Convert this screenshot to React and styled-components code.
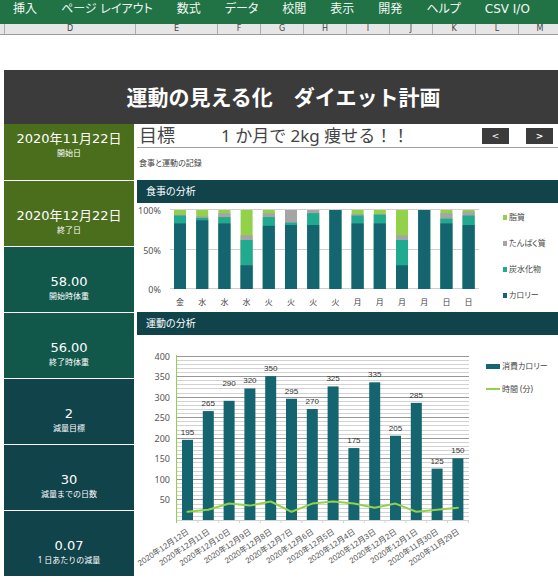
import React from "react";
import styled, { createGlobalStyle } from "styled-components";

const jp = `"Noto Sans CJK JP", sans-serif`;
const ui = `"DejaVu Sans", ${jp}`;
const plain = `"Noto Sans", ${jp}`;
const arial = `"Liberation Sans", ${jp}`;

const colors = {
  ribbon: "#217346",
  title: "#3b3b3b",
  olive: "#4a6e1b",
  green: "#11584a",
  navy: "#11434b",
  calorie: "#156570",
  carb: "#20ab90",
  protein: "#a5a5a5",
  fat: "#92d14a",
};

const GlobalStyle = createGlobalStyle`
  * {
    box-sizing: border-box;
  }

  body {
    margin: 0;
    background: #fff;
    color: #444;
    font-family: ${plain};
    font-feature-settings: "palt";
    overflow-x: hidden;
  }

  h1, h2, p, dl, dd, ul {
    margin: 0;
    padding: 0;
    font-weight: 400;
  }
`;

const Ribbon = styled.nav`
  display: flex;
  gap: 24px;
  height: 24px;
  padding: 0 13px;
  background: ${colors.ribbon};
  overflow: hidden;
`;

const RibbonTab = styled.button`
  height: 18px;
  padding: 0;
  border: 0;
  background: none;
  color: #f2f8f4;
  font: 12px/18px ${ui};
  font-feature-settings: inherit;
  white-space: nowrap;
  cursor: pointer;
`;

const ColumnRow = styled.div`
  display: grid;
  grid-template-columns: 5px 131px 82px repeat(8, 43px);
  height: 11px;
  background: #e6e6e6;
  border-bottom: 1px solid #9b9b9b;
  overflow: hidden;
`;

const ColumnName = styled.span`
  border-right: 1px solid #ababab;
  font: 8px/10px ${ui};
  text-align: center;
`;

const Sheet = styled.main`
  padding: 35px 0 5px 4px;
`;

const Title = styled.h1`
  padding: 10px 0 12px 5px;
  background: ${colors.title};
  color: #fff;
  font: 700 21px/32px ${jp};
  font-feature-settings: normal;
  text-align: center;
  white-space: nowrap;
`;

const Columns = styled.div`
  display: grid;
  grid-template-columns: 130px minmax(0, 1fr);
  gap: 3px;
`;

const Summary = styled.dl`
  display: flex;
  flex-direction: column;
  gap: 1px;
`;

const Card = styled.div`
  display: flex;
  flex-direction: column-reverse;
  height: ${(p) => (p.$first ? 56 : 65)}px;
  padding-bottom: ${(p) => (p.$first ? 21 : 10)}px;
  background: ${(p) => p.$color};
  color: #fff;
  text-align: center;
`;

const CardLabel = styled.dt`
  font: 8px/12px ${plain};
`;

const CardValue = styled.dd`
  font: 13px/16px ${ui};
  white-space: nowrap;
`;

const GoalRow = styled.div`
  display: flex;
  align-items: center;
  height: 24px;
  padding: 0 5px 0 2px;
  border-bottom: 1px solid #a0a0a0;
  font-size: 18px;
  line-height: 23px;
  white-space: nowrap;
`;

const GoalLabel = styled.span`
  width: 82px;
`;

const GoalText = styled.span`
  flex: 1;
  font-size: 17px;
  font-feature-settings: normal;
`;

const Pager = styled.div`
  display: flex;
  gap: 17px;
`;

const PageButton = styled.button`
  width: 27px;
  height: 16px;
  padding: 0;
  border: 0;
  background: ${colors.title};
  color: #fff;
  font: ${(p) => (p.$bold ? 700 : 400)} 9px/16px ${ui};
  cursor: pointer;
`;

const Note = styled.p`
  padding: 7px 2px 9px;
  font-size: 8px;
  line-height: 16px;
`;

const SectionTitle = styled.h2`
  padding: 0 9px;
  background: ${colors.navy};
  color: #fff;
  font-size: 10px;
  line-height: 23px;
`;

const ChartRow = styled.div`
  display: flex;
  align-items: flex-start;
`;

const Chart = styled.svg`
  display: block;
  flex: 1;
  min-width: 0;
`;

const AxisText = styled.text`
  fill: #555;
  font: 9px ${plain};
  text-anchor: end;
`;

const DayText = styled.text`
  fill: #444;
  font: 8px ${plain};
  text-anchor: middle;
`;

const DateText = styled.text`
  fill: #555;
  font: 8px ${arial};
  text-anchor: end;
`;

const BarText = styled.text`
  fill: #333;
  font: 8px ${arial};
  text-anchor: middle;
`;

const Legend = styled.ul`
  display: flex;
  flex-direction: column;
  gap: ${(p) => p.$gap}px;
  width: ${(p) => p.$width}px;
  padding-top: ${(p) => p.$top}px;
  list-style: none;
`;

const LegendItem = styled.li`
  display: flex;
  align-items: center;
  gap: 2px;
  font-size: 8px;
  line-height: 12px;
  white-space: nowrap;
`;

const Swatch = styled.span`
  width: ${(p) => p.$width}px;
  height: ${(p) => p.$height}px;
  background: ${(p) => p.$color};
`;

const tabs = [
  "挿入",
  "ページ レイアウト",
  "数式",
  "データ",
  "校閲",
  "表示",
  "開発",
  "ヘルプ",
  "CSV I/O",
];

const cards = [
  { value: "2020年11月22日", label: "開始日", color: colors.olive },
  { value: "2020年12月22日", label: "終了日", color: colors.olive },
  { value: "58.00", label: "開始時体重", color: colors.green },
  { value: "56.00", label: "終了時体重", color: colors.green },
  { value: "2", label: "減量目標", color: colors.navy },
  { value: "30", label: "減量までの日数", color: colors.navy },
  { value: "0.07", label: "1 日あたりの減量", color: colors.navy },
];

// cumulative percentages: calorie, carb, protein (fat fills the rest)
const meals = [
  ["金", 83, 93, 94],
  ["水", 87, 90, 92],
  ["水", 83, 91, 96],
  ["水", 30, 62, 68],
  ["火", 80, 91, 96],
  ["火", 81, 84, 100],
  ["火", 81, 96, 100],
  ["火", 100, 100, 100],
  ["月", 83, 93, 95],
  ["月", 83, 94, 95],
  ["月", 30, 62, 68],
  ["月", 100, 100, 100],
  ["日", 83, 89, 96],
  ["日", 81, 93, 98],
];

// date, burned calories, minutes, extra label lift
const workouts = [
  ["2020年12月12日", 195, 20],
  ["2020年12月11日", 265, 25],
  ["2020年12月10日", 290, 40, 10],
  ["2020年12月9日", 320, 35],
  ["2020年12月8日", 350, 45],
  ["2020年12月7日", 295, 20],
  ["2020年12月6日", 270, 40],
  ["2020年12月5日", 325, 45],
  ["2020年12月4日", 175, 40],
  ["2020年12月3日", 335, 30],
  ["2020年12月2日", 205, 40],
  ["2020年12月1日", 285, 20],
  ["2020年11月30日", 125, 25],
  ["2020年11月29日", 150, 30],
];

const MealChart = () => {
  const y = (v) => 86 - v * 0.79;
  const x = (i) => 43 + i * 22.2;
  return (
    <Chart viewBox="0 0 366 109" role="img" aria-label="食事の分析">
      {[0, 50, 100].map((v) => (
        <g key={v}>
          <path d={`M33 ${Math.round(y(v)) - 0.5}H342`} stroke="#cfcfcf" />
          <AxisText x="24" y={y(v) + 4}>{`${v}%`}</AxisText>
        </g>
      ))}
      {meals.map(([day, calorie, carb, protein], i) => (
        <g key={i}>
          <rect x={x(i) - 6} y={y(100)} width="12" height="79" fill={colors.fat} />
          <rect x={x(i) - 6} y={y(protein)} width="12" height={86 - y(protein)} fill={colors.protein} />
          <rect x={x(i) - 6} y={y(carb)} width="12" height={86 - y(carb)} fill={colors.carb} />
          <rect x={x(i) - 6} y={y(calorie)} width="12" height={86 - y(calorie)} fill={colors.calorie} />
          <DayText x={x(i)} y="102">
            {day}
          </DayText>
        </g>
      ))}
    </Chart>
  );
};

const WorkoutChart = () => {
  const y = (v) => 185 - v * 0.411;
  const x = (i) => 50.5 + i * 20.8;
  const steps = Array.from({ length: 40 }, (_, i) => (i + 1) * 10);
  return (
    <Chart viewBox="0 0 349 242" role="img" aria-label="運動の分析">
      {steps.map((v) => (
        <path
          key={v}
          d={`M40 ${Math.round(y(v)) + 0.5}H332`}
          stroke={v % 50 ? "#d2d2d2" : "#989898"}
        />
      ))}
      {steps
        .filter((v) => v % 50 === 0)
        .map((v) => (
          <AxisText key={v} x="33" y={y(v) + 4}>
            {v}
          </AxisText>
        ))}
      <path d="M40 185.5H332" stroke="#d2d2d2" />
      {workouts.map(([date, calories, minutes, lift = 0], i) => (
        <g key={date}>
          <rect x={x(i) - 5.5} y={y(calories)} width="11" height={185 - y(calories)} fill={colors.calorie} />
          <path d={`M${x(i) + 10.4} 185v3`} stroke="#d2d2d2" />
          <BarText x={x(i)} y={y(calories) - 5 - lift}>
            {calories}
          </BarText>
          <DateText transform={`translate(${x(i) + 2} 198) rotate(-34)`}>{date}</DateText>
        </g>
      ))}
      <path d="M39.5 20V188" stroke={colors.fat} />
      <polyline
        points={workouts.map((w, i) => `${x(i)},${y(w[2])}`).join(" ")}
        fill="none"
        stroke={colors.fat}
        strokeWidth="2"
        strokeLinecap="round"
        strokeLinejoin="round"
      />
    </Chart>
  );
};

const mealLegend = [
  ["脂質", colors.fat],
  ["たんぱく質", colors.protein],
  ["炭水化物", colors.carb],
  ["カロリー", colors.calorie],
];

export default function App() {
  return (
    <>
      <GlobalStyle />
      <Ribbon>
        {tabs.map((tab) => (
          <RibbonTab key={tab} type="button">
            {tab}
          </RibbonTab>
        ))}
      </Ribbon>
      <ColumnRow>
        <ColumnName />
        {[..."DEFGHIJKLM"].map((name) => (
          <ColumnName key={name}>{name}</ColumnName>
        ))}
      </ColumnRow>
      <Sheet>
        <Title>運動の見える化　ダイエット計画</Title>
        <Columns>
          <Summary>
            {cards.map((card, i) => (
              <Card key={card.label} $color={card.color} $first={i === 0}>
                <CardLabel>{card.label}</CardLabel>
                <CardValue>{card.value}</CardValue>
              </Card>
            ))}
          </Summary>
          <section>
            <GoalRow>
              <GoalLabel>目標</GoalLabel>
              <GoalText>1 か月で 2kg 痩せる！！</GoalText>
              <Pager>
                <PageButton type="button" aria-label="前へ">
                  &lt;
                </PageButton>
                <PageButton type="button" aria-label="次へ" $bold>
                  &gt;
                </PageButton>
              </Pager>
            </GoalRow>
            <Note>食事と運動の記録</Note>
            <SectionTitle>食事の分析</SectionTitle>
            <ChartRow>
              <MealChart />
              <Legend $width={55} $top={8} $gap={14}>
                {mealLegend.map(([name, color]) => (
                  <LegendItem key={name}>
                    <Swatch $width={4} $height={5} $color={color} />
                    {name}
                  </LegendItem>
                ))}
              </Legend>
            </ChartRow>
            <SectionTitle>運動の分析</SectionTitle>
            <ChartRow>
              <WorkoutChart />
              <Legend $width={72} $top={25} $gap={11}>
                <LegendItem>
                  <Swatch $width={14} $height={5} $color={colors.calorie} />
                  消費カロリー
                </LegendItem>
                <LegendItem>
                  <Swatch $width={14} $height={2} $color={colors.fat} />
                  時間 (分)
                </LegendItem>
              </Legend>
            </ChartRow>
          </section>
        </Columns>
      </Sheet>
    </>
  );
}
